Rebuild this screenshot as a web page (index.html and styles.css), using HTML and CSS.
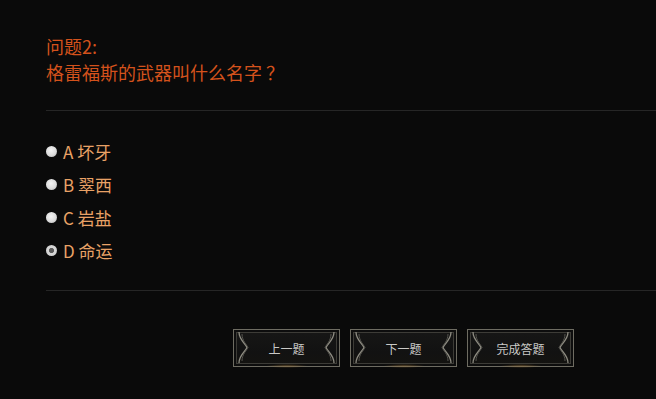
FILE: index.html
```html
<!DOCTYPE html>
<html lang="zh-CN">
<head>
<meta charset="utf-8">
<title>问题2</title>
<link rel="stylesheet" href="styles.css">
</head>
<body>
<div class="quiz">
  <div class="question">
    <div class="q-num">问题2:</div>
    <div class="q-text">格雷福斯的武器叫什么名字<span class="qmark">？</span></div>
  </div>
  <div class="divider"></div>
  <ul class="options">
    <li class="option"><span class="radio"></span><span class="label">A 坏牙</span></li>
    <li class="option"><span class="radio"></span><span class="label">B 翠西</span></li>
    <li class="option"><span class="radio"></span><span class="label">C 岩盐</span></li>
    <li class="option"><span class="radio checked"></span><span class="label">D 命运</span></li>
  </ul>
  <div class="divider divider-2"></div>
  <div class="actions">
    <button class="btn">
      <svg class="deco deco-l" viewBox="0 0 12 33" width="12" height="33"><path d="M2 1 C2 9 9 13 10 16.5 C9 20 2 24 2 32"/><path class="thin" d="M5 3 C5 10 10 14 11 16.5 C10 19 5 23 5 30"/></svg>
      <span>上一题</span>
      <svg class="deco deco-r" viewBox="0 0 12 33" width="12" height="33"><path d="M10 1 C10 9 3 13 2 16.5 C3 20 10 24 10 32"/><path class="thin" d="M7 3 C7 10 2 14 1 16.5 C2 19 7 23 7 30"/></svg>
    </button>
    <button class="btn">
      <svg class="deco deco-l" viewBox="0 0 12 33" width="12" height="33"><path d="M2 1 C2 9 9 13 10 16.5 C9 20 2 24 2 32"/><path class="thin" d="M5 3 C5 10 10 14 11 16.5 C10 19 5 23 5 30"/></svg>
      <span>下一题</span>
      <svg class="deco deco-r" viewBox="0 0 12 33" width="12" height="33"><path d="M10 1 C10 9 3 13 2 16.5 C3 20 10 24 10 32"/><path class="thin" d="M7 3 C7 10 2 14 1 16.5 C2 19 7 23 7 30"/></svg>
    </button>
    <button class="btn">
      <svg class="deco deco-l" viewBox="0 0 12 33" width="12" height="33"><path d="M2 1 C2 9 9 13 10 16.5 C9 20 2 24 2 32"/><path class="thin" d="M5 3 C5 10 10 14 11 16.5 C10 19 5 23 5 30"/></svg>
      <span>完成答题</span>
      <svg class="deco deco-r" viewBox="0 0 12 33" width="12" height="33"><path d="M10 1 C10 9 3 13 2 16.5 C3 20 10 24 10 32"/><path class="thin" d="M7 3 C7 10 2 14 1 16.5 C2 19 7 23 7 30"/></svg>
    </button>
  </div>
</div>
</body>
</html>
```
FILE: styles.css
```css
html, body {
  margin: 0;
  padding: 0;
  background: #0a0a0a;
}
body {
  width: 656px;
  height: 399px;
  overflow: hidden;
  font-family: "Noto Sans CJK SC", "Noto Sans", sans-serif;
}
.quiz {
  padding: 33px 0 0 46px;
}
.question {
  color: #d4521c;
  font-size: 18px;
  line-height: 26px;
}
.qmark {
  display: inline-block;
  margin-left: 4px;
}
.divider {
  height: 1px;
  background: #262626;
  margin-top: 25px;
}
.options {
  list-style: none;
  margin: 24px 0 0 0;
  padding: 0;
}
.option {
  display: flex;
  align-items: center;
  height: 33px;
  color: #e9a266;
  font-size: 17px;
}
.radio {
  width: 11px;
  height: 11px;
  border-radius: 50%;
  background: radial-gradient(circle at 45% 40%, #f4f4f4 0%, #dcdcdc 55%, #a8a8a8 100%);
  margin-right: 6px;
  flex: none;
}
.radio.checked {
  background: radial-gradient(circle at 50% 50%, #5a5a5a 0%, #5a5a5a 28%, #d8d8d8 38%, #d0d0d0 70%, #9a9a9a 100%);
}
.label {
  line-height: 33px;
}
.divider-2 {
  margin-top: 23px;
}
.actions {
  display: flex;
  gap: 10px;
  padding-left: 187px;
  margin-top: 38px;
}
.btn {
  position: relative;
  width: 107px;
  height: 38px;
  padding: 0;
  border: 1px solid #6e6c62;
  background: linear-gradient(180deg, #171716 0%, #121212 60%, #141310 100%);
  box-shadow: inset 0 0 0 2px #0d0d0d, inset 0 0 0 3px #3d3c37;
  color: #c9c9c6;
  font-family: "Noto Sans CJK SC", "Noto Sans", sans-serif;
  font-size: 12px;
  display: flex;
  align-items: center;
  justify-content: center;
  cursor: pointer;
}
.btn::after {
  content: "";
  position: absolute;
  left: 30%;
  right: 30%;
  bottom: -2px;
  height: 4px;
  background: radial-gradient(ellipse at center, rgba(150, 115, 60, 0.55) 0%, rgba(150, 115, 60, 0) 70%);
}
.deco {
  position: absolute;
  top: 1px;
  fill: none;
  stroke: #8e8c82;
  stroke-width: 1.3;
}
.deco .thin {
  stroke: #55544e;
  stroke-width: 1;
}
.deco-l { left: 3px; }
.deco-r { right: 3px; }
```
